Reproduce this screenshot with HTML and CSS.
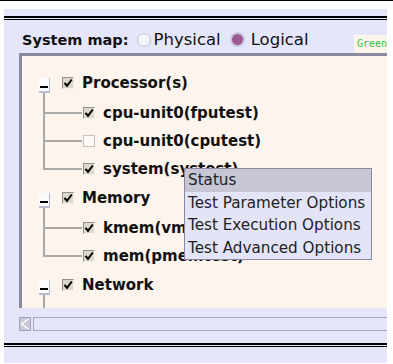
FILE: index.html
```html
<!DOCTYPE html>
<html>
<head>
<meta charset="utf-8">
<link rel="stylesheet" href="styles.css">
</head>
<body>
<div class="topline"></div>
<div class="win">
  <div class="rule"></div>
  <div class="header">
    <span class="title">System map:</span>
    <span class="radio"></span><span class="rlabel">Physical</span>
    <span class="radio on"></span><span class="rlabel">Logical</span>
    <span class="green">Green</span>
  </div>
  <div class="panel">
    <div class="group">
      <div class="row parent">
        <span class="tw"><span class="ebox"><span class="dash"></span></span></span>
        <span class="cb checked"><svg width="10" height="10" viewBox="0 0 10 10"><path d="M1.5 4.8 L4 7.8 L8.8 1.5" fill="none" stroke="#000" stroke-width="2"/></svg></span><span class="lbl">Processor(s)</span>
      </div>
      <div class="children">
        <div class="spacer"></div>
        <div class="row child"><span class="conn"><span class="a"></span><span class="b"></span></span><span class="cb checked"><svg width="10" height="10" viewBox="0 0 10 10"><path d="M1.5 4.8 L4 7.8 L8.8 1.5" fill="none" stroke="#000" stroke-width="2"/></svg></span><span class="lbl">cpu-unit0(fputest)</span></div>
        <div class="row child"><span class="conn"><span class="a"></span><span class="b"></span></span><span class="cb empty"></span><span class="lbl">cpu-unit0(cputest)</span></div>
        <div class="row child last"><span class="conn"><span class="a"></span><span class="b"></span></span><span class="cb checked"><svg width="10" height="10" viewBox="0 0 10 10"><path d="M1.5 4.8 L4 7.8 L8.8 1.5" fill="none" stroke="#000" stroke-width="2"/></svg></span><span class="lbl">system(systest)</span></div>
      </div>
    </div>
    <div class="group">
      <div class="row parent">
        <span class="tw"><span class="ebox"><span class="dash"></span></span></span>
        <span class="cb checked"><svg width="10" height="10" viewBox="0 0 10 10"><path d="M1.5 4.8 L4 7.8 L8.8 1.5" fill="none" stroke="#000" stroke-width="2"/></svg></span><span class="lbl">Memory</span>
      </div>
      <div class="children">
        <div class="spacer"></div>
        <div class="row child"><span class="conn"><span class="a"></span><span class="b"></span></span><span class="cb checked"><svg width="10" height="10" viewBox="0 0 10 10"><path d="M1.5 4.8 L4 7.8 L8.8 1.5" fill="none" stroke="#000" stroke-width="2"/></svg></span><span class="lbl">kmem(vmemtest)</span></div>
        <div class="row child last"><span class="conn"><span class="a"></span><span class="b"></span></span><span class="cb checked"><svg width="10" height="10" viewBox="0 0 10 10"><path d="M1.5 4.8 L4 7.8 L8.8 1.5" fill="none" stroke="#000" stroke-width="2"/></svg></span><span class="lbl">mem(pmemtest)</span></div>
      </div>
    </div>
    <div class="group">
      <div class="row parent">
        <span class="tw"><span class="ebox"><span class="dash"></span></span></span>
        <span class="cb checked"><svg width="10" height="10" viewBox="0 0 10 10"><path d="M1.5 4.8 L4 7.8 L8.8 1.5" fill="none" stroke="#000" stroke-width="2"/></svg></span><span class="lbl">Network</span>
      </div>
      <div class="children">
        <div class="spacer"></div>
        <div class="row child"><span class="conn"><span class="a"></span><span class="b"></span></span><span class="cb empty"></span></div>
      </div>
    </div>
  </div>
  <div class="hscroll">
    <span class="sbtn"><svg width="10" height="12" viewBox="0 0 10 12"><path d="M8.5 1 L1.5 6 L8.5 11" fill="none" stroke="#ffffff" stroke-width="1.3"/></svg></span>
    <span class="track"></span>
  </div>
  <div class="rule bottom"></div>
</div>
<div class="menu">
  <div class="mi sel">Status</div>
  <div class="mi">Test Parameter Options</div>
  <div class="mi">Test Execution Options</div>
  <div class="mi">Test Advanced Options</div>
</div>
</body>
</html>
```

FILE: styles.css
```css
html, body {
  margin: 0;
  padding: 0;
  background: #ffffff;
  width: 393px;
  height: 364px;
  overflow: hidden;
  font-family: "DejaVu Sans", "Liberation Sans", sans-serif;
  position: relative;
}
.topline {
  height: 1px;
  background: #000;
}
.win {
  margin: 8px 6px 0 4px;
  height: 354px;
  background: #e6e6fa;
  overflow: hidden;
}
.rule {
  margin-top: 7px;
  height: 1px;
  border-top: 2px solid #000;
  border-bottom: 1px solid #000;
}
.rule.bottom {
  margin-top: 12px;
}
.header {
  height: 33px;
  box-sizing: border-box;
  padding-top: 6px;
  display: flex;
  align-items: center;
  padding-left: 18px;
  font-size: 14.5px;
  color: #111;
}
.title {
  font-weight: bold;
  margin-right: 8px;
}
.radio {
  width: 12px;
  height: 12px;
  border-radius: 50%;
  border: 1px solid #c0c0d0;
  background: #f4f4fc;
  margin-right: 3px;
  flex: none;
}
.radio.on {
  background: #9a5a94;
  border: 2px solid #c8c8d8;
  width: 11px;
  height: 11px;
  margin-left: 9px;
  margin-right: 6px;
}
.rlabel {
  color: #111;
  font-size: 16.5px;
}
.green {
  margin-left: auto;
  align-self: flex-end;
  height: 18px;
  line-height: 18px;
  padding-left: 3px;
  width: 30px;
  background: #fdf4ee;
  color: #2ec82e;
  font-family: "DejaVu Sans Mono", monospace;
  font-size: 10px;
  overflow: hidden;
  white-space: nowrap;
}
.panel {
  margin-left: 15px;
  border-top: 3px solid #8a8a9e;
  border-left: 3px solid #8a8a9e;
  background: #fdf4ee;
  overflow: hidden;
  padding: 13px 0 0 16px;
  box-sizing: border-box;
  height: 255px;
}
.group + .group {
  margin-top: 1px;
}
.row {
  display: flex;
  align-items: center;
  height: 28px;
  font-size: 15px;
  font-weight: bold;
  color: #111;
  white-space: nowrap;
}
.tw {
  align-self: stretch;
  width: 12px;
  display: flex;
  flex-direction: column;
  align-items: center;
  margin-right: 12px;
  flex: none;
}
.tw::before {
  content: "";
  flex: 1;
}
.tw::after {
  content: "";
  flex: 1;
  width: 2px;
  background: #a8a8a8;
}
.ebox {
  width: 11px;
  height: 15px;
  box-sizing: border-box;
  background: #fbfbff;
  border-right: 1px solid #b8b8d0;
  border-bottom: 2px solid #b8b8d0;
  display: flex;
  align-items: flex-end;
  justify-content: center;
  padding-bottom: 3px;
  margin-top: 4px;
}
.dash {
  width: 8px;
  height: 2px;
  background: #000;
}
.cb {
  width: 12px;
  height: 12px;
  box-sizing: border-box;
  display: inline-flex;
  align-items: center;
  justify-content: center;
  flex: none;
}
.cb.checked {
  background: #dcd8cc;
  border-top: 1px solid #909090;
  border-left: 1px solid #909090;
  border-right: 1px solid #f4f0ea;
  border-bottom: 1px solid #f4f0ea;
}
.cb.empty {
  background: #fffaf6;
  border: 1px solid #c4c4c4;
}
.parent .lbl {
  margin-left: 8px;
}
.children {
  margin-left: 5px;
}
.spacer {
  height: 2px;
  width: 0;
  border-left: 2px solid #a8a8a8;
}
.conn {
  align-self: stretch;
  width: 39px;
  display: flex;
  flex-direction: column;
  flex: none;
}
.conn .a {
  flex: 1;
  border-left: 2px solid #a8a8a8;
  border-bottom: 2px solid #a8a8a8;
}
.conn .b {
  flex: 1;
  border-left: 2px solid #a8a8a8;
}
.child.last .conn .b {
  border-left-color: transparent;
}
.child .cb {
  margin-left: 1px;
}
.child .lbl {
  margin-left: 8px;
}
.hscroll {
  margin: 9px 0 0 15px;
  height: 14px;
  display: flex;
}
.sbtn {
  width: 12px;
  height: 14px;
  background: #c8c8d8;
  box-sizing: border-box;
  border: 1px solid #a0a0b4;
  display: flex;
  align-items: center;
  justify-content: center;
}
.track {
  flex: 1;
  margin-left: 2px;
  box-sizing: border-box;
  border-top: 1px solid #a8a8bc;
  border-bottom: 1px solid #a8a8bc;
  border-left: 1px solid #a8a8bc;
  background: #e6e6fa;
}
.menu {
  position: absolute;
  left: 184px;
  top: 168px;
  width: 188px;
  box-sizing: border-box;
  border: 1px solid #8888a0;
  background: #e4e4f8;
  font-size: 15.2px;
  color: #222;
}
.mi {
  height: 22.5px;
  line-height: 22px;
  padding-left: 3px;
  white-space: nowrap;
}
.mi.sel {
  background: #c6c6d4;
}
```
